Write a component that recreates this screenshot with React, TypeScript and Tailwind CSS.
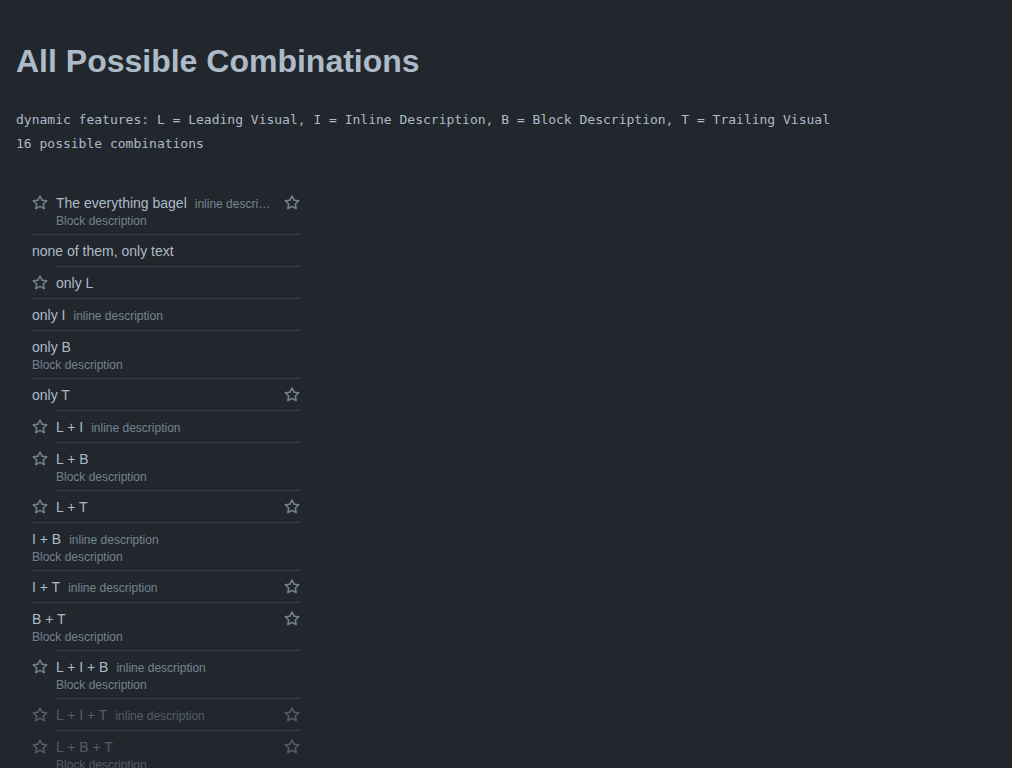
import React from "react";

type Item = {
  title: string;
  leading?: boolean;
  inline?: boolean;
  block?: boolean;
  trailing?: boolean;
  disabled?: boolean;
};

const items: Item[] = [
  { title: "The everything bagel", leading: true, inline: true, block: true, trailing: true },
  { title: "none of them, only text" },
  { title: "only L", leading: true },
  { title: "only I", inline: true },
  { title: "only B", block: true },
  { title: "only T", trailing: true },
  { title: "L + I", leading: true, inline: true },
  { title: "L + B", leading: true, block: true },
  { title: "L + T", leading: true, trailing: true },
  { title: "I + B", inline: true, block: true },
  { title: "I + T", inline: true, trailing: true },
  { title: "B + T", block: true, trailing: true },
  { title: "L + I + B", leading: true, inline: true, block: true },
  { title: "L + I + T", leading: true, inline: true, trailing: true, disabled: true },
  { title: "L + B + T", leading: true, block: true, trailing: true, disabled: true },
  { title: "I + B + T", inline: true, block: true, trailing: true, disabled: true },
];

function Star({ dim }: { dim?: boolean }) {
  return (
    <svg
      width="16"
      height="16"
      viewBox="0 0 16 16"
      className={dim ? "fill-[#545d68]" : "fill-[#768390]"}
    >
      <path d="M8 .25a.75.75 0 0 1 .673.418l1.882 3.815 4.21.612a.75.75 0 0 1 .416 1.279l-3.046 2.97.719 4.192a.751.751 0 0 1-1.088.791L8 12.347l-3.766 1.98a.75.75 0 0 1-1.088-.79l.72-4.194L.818 6.374a.75.75 0 0 1 .416-1.28l4.21-.611L7.327.668A.75.75 0 0 1 8 .25Zm0 2.445L6.615 5.5a.75.75 0 0 1-.564.41l-3.097.45 2.24 2.184a.75.75 0 0 1 .216.664l-.528 3.084 2.769-1.456a.75.75 0 0 1 .698 0l2.77 1.456-.53-3.084a.75.75 0 0 1 .216-.664l2.24-2.183-3.096-.45a.75.75 0 0 1-.564-.41L8 2.694Z" />
    </svg>
  );
}

function ListItem({ item, first }: { item: Item; first: boolean }) {
  const titleColor = item.disabled ? "text-[#545d68]" : "text-[#adbac7]";
  const mutedColor = item.disabled ? "text-[#545d68]" : "text-[#768390]";

  return (
    <li className="flex">
      {item.leading && (
        <div
          className={
            first
              ? "mr-2 mt-[6px] flex h-5 w-4 shrink-0 items-center"
              : "mr-2 mt-[7px] flex h-5 w-4 shrink-0 items-center"
          }
        >
          <Star dim={item.disabled} />
        </div>
      )}
      <div
        className={
          first
            ? "flex min-w-0 flex-1 gap-2 pt-[6px] pb-[5px]"
            : "flex min-w-0 flex-1 gap-2 border-t border-[#373e47] pt-[6px] pb-[5px]"
        }
      >
        <div className="flex min-w-0 flex-1 flex-col">
          <div className="flex min-w-0 items-baseline">
            <span className={`shrink-0 text-sm leading-5 ${titleColor}`}>{item.title}</span>
            {item.inline && (
              <span className={`ml-2 truncate text-xs leading-4 ${mutedColor}`}>
                inline description
              </span>
            )}
          </div>
          {item.block && (
            <span className={`text-xs leading-4 ${mutedColor}`}>Block description</span>
          )}
        </div>
        {item.trailing && (
          <div className="flex h-5 w-4 shrink-0 items-center">
            <Star dim={item.disabled} />
          </div>
        )}
      </div>
    </li>
  );
}

export default function App() {
  return (
    <div className="min-h-screen bg-[#22272e] px-4 pt-4 pb-8 font-['Liberation_Sans',Arial,sans-serif] text-[#adbac7]">
      <h1 className="mt-[21px] mb-[23px] text-[32px] font-bold leading-[48px] text-[#adbac7]">
        All Possible Combinations
      </h1>
      <div className="font-['DejaVu_Sans_Mono',monospace] text-[13px] leading-6 text-[#adbac7]">
        <p>
          dynamic features: L = Leading Visual, I = Inline Description, B = Block Description, T =
          Trailing Visual
        </p>
        <p>16 possible combinations</p>
      </div>
      <ul className="ml-4 mt-[31px] w-[268px]">
        {items.map((item, i) => (
          <ListItem key={item.title} item={item} first={i === 0} />
        ))}
      </ul>
    </div>
  );
}
